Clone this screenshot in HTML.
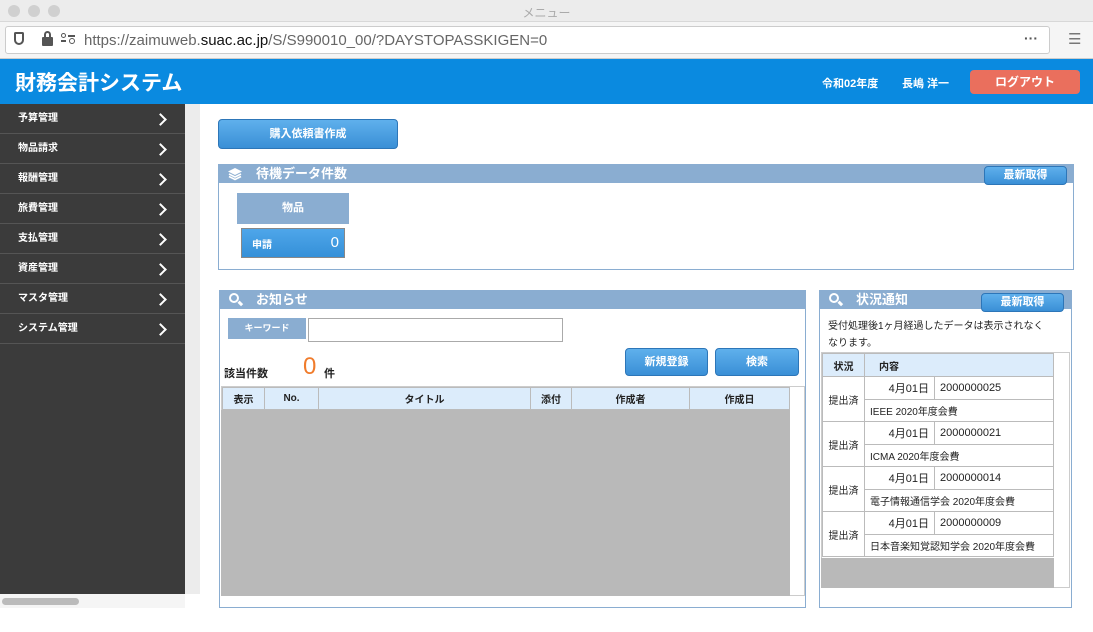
<!DOCTYPE html><html><head><meta charset="utf-8"><style>
*{box-sizing:border-box;margin:0;padding:0}
body{width:1093px;height:632px;overflow:hidden;background:#fff;font-family:"Liberation Sans","Noto Sans CJK JP",sans-serif;position:relative;font-size:11px;color:#222}
.a{position:absolute}
.btn{position:absolute;background:linear-gradient(#5fb0ec,#3a8fd6);border:1px solid #2d76b8;border-radius:4px;color:#fff;font-weight:bold;text-align:center;font-size:11px}
.ph{position:absolute;background:#8aadd1;color:#fff;font-weight:bold;font-size:13px;height:19px;line-height:19px}
.panel{position:absolute;border:1px solid #8aadd1}
.side div{height:30px;border-bottom:1px solid #555;color:#fff;font-weight:bold;font-size:10px;line-height:30px;padding-left:18px;position:relative}
.side div:after{content:"";position:absolute;right:20px;top:11px;width:7px;height:7px;border-right:2.5px solid #fff;border-top:2.5px solid #fff;transform:rotate(45deg)}
table{border-collapse:collapse}
td,th{border:1px solid #bbb;font-size:10px}
.mg{position:absolute;width:10px;height:10px;border:2.5px solid #fff;border-radius:50%}
.mg:after{content:"";position:absolute;left:7px;top:7px;width:5px;height:2.5px;background:#fff;transform:rotate(45deg)}
</style></head><body>
<div class="a" style="left:0;top:0;width:1093px;height:22px;background:#ececec;border-bottom:1px solid #d8d8d8"></div>
<div class="a" style="left:8px;top:5px;width:12px;height:12px;border-radius:6px;background:#d0d0d0"></div>
<div class="a" style="left:28px;top:5px;width:12px;height:12px;border-radius:6px;background:#d0d0d0"></div>
<div class="a" style="left:48px;top:5px;width:12px;height:12px;border-radius:6px;background:#d0d0d0"></div>
<div class="a" style="left:0;top:4px;width:1093px;text-align:center;color:#aaa;font-size:12px">メニュー</div>
<div class="a" style="left:0;top:22px;width:1093px;height:37px;background:#f5f5f5;border-bottom:1px solid #ccc"></div>
<div class="a" style="left:5px;top:26px;width:1045px;height:28px;background:#fff;border:1px solid #ccc;border-radius:3px"></div>
<div class="a" style="left:14px;top:32px;width:10px;height:13px;border:2px solid #555;border-radius:2px 2px 6px 6px"></div>
<div class="a" style="left:42px;top:37px;width:11px;height:9px;background:#555;border-radius:1px"></div>
<div class="a" style="left:44px;top:31px;width:7px;height:8px;border:2px solid #555;border-radius:4px 4px 0 0"></div>
<div class="a" style="left:61px;top:33px;width:5px;height:5px;border:1.5px solid #555;border-radius:50%"></div>
<div class="a" style="left:61px;top:40px;width:5px;height:2px;background:#555"></div>
<div class="a" style="left:68px;top:35px;width:7px;height:2px;background:#555"></div>
<div class="a" style="left:69px;top:38px;width:6px;height:6px;border:1.5px solid #555;border-radius:50%"></div>
<div class="a" style="left:84px;top:32px;font-size:15px;color:#666">https://zaimuweb.<span style="color:#111">suac.ac.jp</span>/S/S990010_00/?DAYSTOPASSKIGEN=0</div>
<div class="a" style="left:1024px;top:30px;font-size:14px;color:#555;font-weight:bold">···</div>
<div class="a" style="left:1068px;top:30px;font-size:15px;color:#777">☰</div>
<div class="a" style="left:0;top:59px;width:1093px;height:45px;background:#0a8ae0"></div>
<div class="a" style="left:15px;top:67px;color:#fff;font-size:21px;font-weight:bold">財務会計システム</div>
<div class="a" style="left:822px;top:75px;color:#fff;font-size:11px;font-weight:bold">令和02年度</div>
<div class="a" style="left:902px;top:75px;color:#fff;font-size:11px;font-weight:bold">長嶋 洋一</div>
<div class="a" style="left:970px;top:70px;width:110px;height:24px;background:#ea6f5d;border-radius:4px;color:#fff;font-weight:bold;font-size:12px;text-align:center;line-height:24px">ログアウト</div>
<div class="a side" style="left:0;top:104px;width:185px;height:490px;background:#3b3b3b">
<div>予算管理</div><div>物品請求</div><div>報酬管理</div><div>旅費管理</div><div>支払管理</div><div>資産管理</div><div>マスタ管理</div><div>システム管理</div></div>
<div class="a" style="left:185px;top:104px;width:15px;height:490px;background:#ececec"></div>
<div class="a" style="left:0;top:594px;width:185px;height:14px;background:#f5f5f5"></div>
<div class="a" style="left:2px;top:598px;width:77px;height:7px;background:#bbb;border-radius:4px"></div>
<div class="btn" style="left:218px;top:119px;width:180px;height:30px;line-height:28px">購入依頼書作成</div>
<div class="panel" style="left:218px;top:164px;width:856px;height:106px"></div>
<div class="ph" style="left:218px;top:164px;width:856px;padding-left:38px">待機データ件数</div>
<svg class="a" style="left:227px;top:167px" width="16" height="14" viewBox="0 0 16 14"><path d="M8 1L15 4.5 8 8 1 4.5Z" fill="#fff"/><path d="M2 7l6 3 6-3M2 9.5l6 3 6-3" stroke="#fff" stroke-width="1.6" fill="none"/></svg>
<div class="btn" style="left:984px;top:166px;width:83px;height:19px;line-height:17px">最新取得</div>
<div class="a" style="left:237px;top:193px;width:112px;height:31px;background:#8aadd1;color:#fff;font-weight:bold;text-align:center;line-height:31px;font-size:11px">物品</div>
<div class="a" style="left:241px;top:228px;width:104px;height:30px;background:linear-gradient(#4ea6ea,#3590d8);border:1px solid #888;color:#fff"><b style="position:absolute;left:10px;top:7px;font-size:10px">申請</b><span style="position:absolute;right:5px;top:5px;font-size:15px">0</span></div>
<div class="panel" style="left:219px;top:290px;width:587px;height:318px"></div>
<div class="ph" style="left:219px;top:290px;width:587px;padding-left:37px">お知らせ</div>
<div class="mg" style="left:229px;top:293px"></div>
<div class="a" style="left:228px;top:318px;width:78px;height:21px;background:#8aadd1;color:#fff;font-weight:bold;text-align:center;line-height:21px;font-size:9px">キーワード</div>
<div class="a" style="left:308px;top:318px;width:255px;height:24px;border:1px solid #aaa"></div>
<div class="btn" style="left:625px;top:348px;width:83px;height:28px;line-height:26px">新規登録</div>
<div class="btn" style="left:715px;top:348px;width:84px;height:28px;line-height:26px">検索</div>
<div class="a" style="left:224px;top:365px;font-weight:bold;font-size:11px">該当件数</div>
<div class="a" style="left:303px;top:353px;color:#f07c2c;font-size:24px">0</div>
<div class="a" style="left:324px;top:365px;font-weight:bold;font-size:11px">件</div>
<div class="a" style="left:221px;top:386px;width:584px;height:210px;border:1px solid #ccc;background:#fff"></div>
<div class="a" style="left:221px;top:410px;width:569px;height:186px;background:#b9b9b9"></div>
<table class="a" style="left:222px;top:387px;width:568px;height:23px;background:#dcecfb"><tr>
<th style="width:42px">表示</th><th style="width:54px">No.</th><th>タイトル</th><th style="width:41px">添付</th><th style="width:118px">作成者</th><th style="width:100px">作成日</th></tr></table>
<div class="panel" style="left:819px;top:290px;width:253px;height:318px"></div>
<div class="ph" style="left:819px;top:290px;width:253px;padding-left:37px">状況通知</div>
<div class="mg" style="left:829px;top:293px"></div>
<div class="btn" style="left:981px;top:293px;width:83px;height:19px;line-height:17px">最新取得</div>
<div class="a" style="left:828px;top:318px;font-size:10px;line-height:17px;width:222px">受付処理後1ヶ月経過したデータは表示されなくなります。</div>
<div class="a" style="left:821px;top:352px;width:249px;height:236px;border:1px solid #ccc"></div>
<div class="a" style="left:821px;top:558px;width:233px;height:30px;background:#b9b9b9"></div>
<table class="a" style="left:822px;top:353px;width:232px;background:#fff">
<tr style="height:23px;background:#dcecfb"><th style="width:42px">状況</th><th colspan="2" style="text-align:left;padding-left:14px">内容</th></tr>
<tr style="height:23px"><td rowspan="2" style="text-align:center">提出済</td><td style="text-align:right;padding-right:5px;width:70px;font-size:11px">4月01日</td><td style="padding-left:5px;font-size:11px">2000000025</td></tr><tr style="height:22px"><td colspan="2" style="padding-left:5px">IEEE 2020年度会費</td></tr>
<tr style="height:23px"><td rowspan="2" style="text-align:center">提出済</td><td style="text-align:right;padding-right:5px;font-size:11px">4月01日</td><td style="padding-left:5px;font-size:11px">2000000021</td></tr><tr style="height:22px"><td colspan="2" style="padding-left:5px">ICMA 2020年度会費</td></tr>
<tr style="height:23px"><td rowspan="2" style="text-align:center">提出済</td><td style="text-align:right;padding-right:5px;font-size:11px">4月01日</td><td style="padding-left:5px;font-size:11px">2000000014</td></tr><tr style="height:22px"><td colspan="2" style="padding-left:5px">電子情報通信学会 2020年度会費</td></tr>
<tr style="height:23px"><td rowspan="2" style="text-align:center">提出済</td><td style="text-align:right;padding-right:5px;font-size:11px">4月01日</td><td style="padding-left:5px;font-size:11px">2000000009</td></tr><tr style="height:22px"><td colspan="2" style="padding-left:5px">日本音楽知覚認知学会 2020年度会費</td></tr>
</table>
</body></html>
